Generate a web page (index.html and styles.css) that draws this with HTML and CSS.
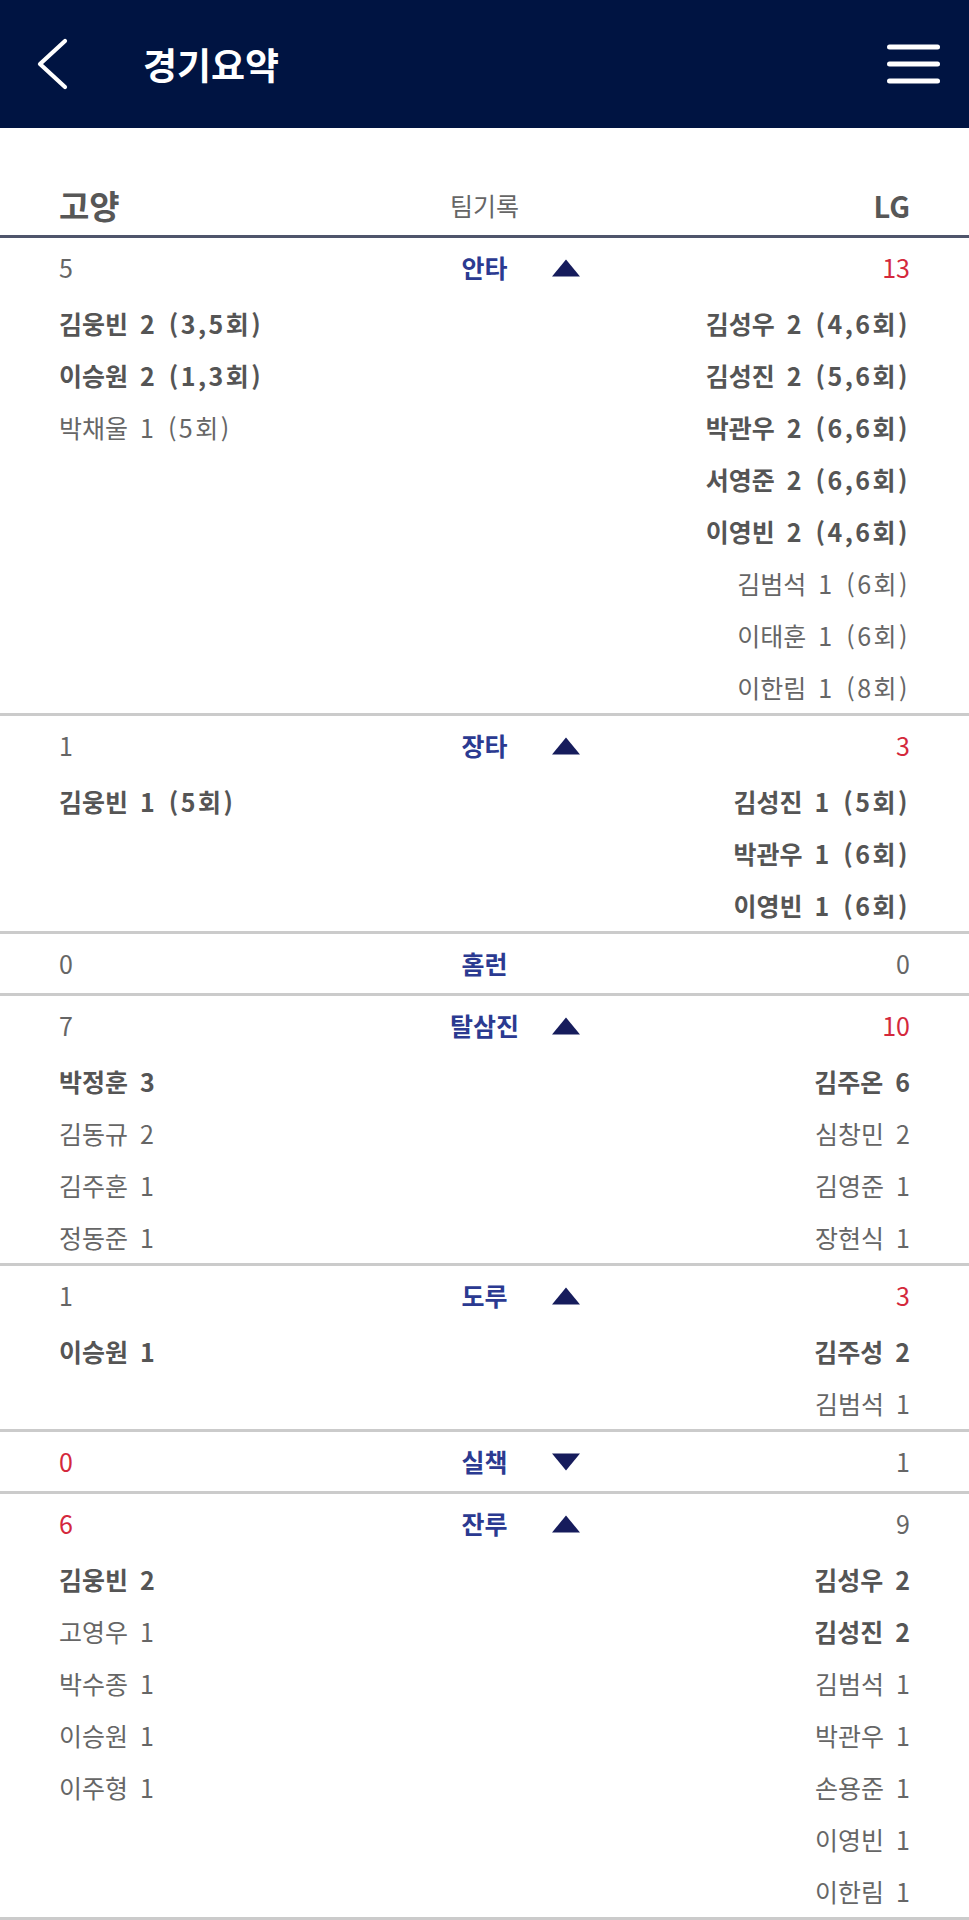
FILE: index.html
```html
<!DOCTYPE html>
<html lang="ko">
<head>
<meta charset="utf-8">
<title>경기요약</title>
<link rel="stylesheet" href="styles.css">
</head>
<body>
<header class="appbar">
  <svg class="back" viewBox="0 0 34 52" aria-hidden="true"><polyline points="29,3 4,26 29,49" fill="none" stroke="#fff" stroke-width="4.2" stroke-linecap="round" stroke-linejoin="round"/></svg>
  <h1 class="title">경기요약</h1>
  <svg class="menu" viewBox="0 0 53 44" aria-hidden="true"><rect x="0" y="2.5" width="53" height="5" rx="2.5" fill="#fff"/><rect x="0" y="19.5" width="53" height="5" rx="2.5" fill="#fff"/><rect x="0" y="36.5" width="53" height="5" rx="2.5" fill="#fff"/></svg>
</header>

<div class="teams">
  <span class="team">고양</span>
  <span class="teams-label">팀기록</span>
  <span class="team r">LG</span>
</div>

<section class="stat">
  <div class="head"><span class="v">5</span><span class="label">안타<i class="tri up"></i></span><span class="v r red">13</span></div>
  <div class="names">
    <div class="col">
      <span class="n b">김웅빈 2 <span class="inn">(3,5회)</span></span>
      <span class="n b">이승원 2 <span class="inn">(1,3회)</span></span>
      <span class="n">박채울 1 <span class="inn">(5회)</span></span>
    </div>
    <div class="col r">
      <span class="n b">김성우 2 <span class="inn">(4,6회)</span></span>
      <span class="n b">김성진 2 <span class="inn">(5,6회)</span></span>
      <span class="n b">박관우 2 <span class="inn">(6,6회)</span></span>
      <span class="n b">서영준 2 <span class="inn">(6,6회)</span></span>
      <span class="n b">이영빈 2 <span class="inn">(4,6회)</span></span>
      <span class="n">김범석 1 <span class="inn">(6회)</span></span>
      <span class="n">이태훈 1 <span class="inn">(6회)</span></span>
      <span class="n">이한림 1 <span class="inn">(8회)</span></span>
    </div>
  </div>
</section>

<section class="stat">
  <div class="head"><span class="v">1</span><span class="label">장타<i class="tri up"></i></span><span class="v r red">3</span></div>
  <div class="names">
    <div class="col">
      <span class="n b">김웅빈 1 <span class="inn">(5회)</span></span>
    </div>
    <div class="col r">
      <span class="n b">김성진 1 <span class="inn">(5회)</span></span>
      <span class="n b">박관우 1 <span class="inn">(6회)</span></span>
      <span class="n b">이영빈 1 <span class="inn">(6회)</span></span>
    </div>
  </div>
</section>

<section class="stat">
  <div class="head"><span class="v">0</span><span class="label">홈런</span><span class="v r">0</span></div>
</section>

<section class="stat">
  <div class="head"><span class="v">7</span><span class="label">탈삼진<i class="tri up"></i></span><span class="v r red">10</span></div>
  <div class="names">
    <div class="col">
      <span class="n b">박정훈 3</span>
      <span class="n">김동규 2</span>
      <span class="n">김주훈 1</span>
      <span class="n">정동준 1</span>
    </div>
    <div class="col r">
      <span class="n b">김주온 6</span>
      <span class="n">심창민 2</span>
      <span class="n">김영준 1</span>
      <span class="n">장현식 1</span>
    </div>
  </div>
</section>

<section class="stat">
  <div class="head"><span class="v">1</span><span class="label">도루<i class="tri up"></i></span><span class="v r red">3</span></div>
  <div class="names">
    <div class="col">
      <span class="n b">이승원 1</span>
    </div>
    <div class="col r">
      <span class="n b">김주성 2</span>
      <span class="n">김범석 1</span>
    </div>
  </div>
</section>

<section class="stat">
  <div class="head"><span class="v red">0</span><span class="label">실책<i class="tri down"></i></span><span class="v r">1</span></div>
</section>

<section class="stat">
  <div class="head"><span class="v red">6</span><span class="label">잔루<i class="tri up"></i></span><span class="v r">9</span></div>
  <div class="names">
    <div class="col">
      <span class="n b">김웅빈 2</span>
      <span class="n">고영우 1</span>
      <span class="n">박수종 1</span>
      <span class="n">이승원 1</span>
      <span class="n">이주형 1</span>
    </div>
    <div class="col r">
      <span class="n b">김성우 2</span>
      <span class="n b">김성진 2</span>
      <span class="n">김범석 1</span>
      <span class="n">박관우 1</span>
      <span class="n">손용준 1</span>
      <span class="n">이영빈 1</span>
      <span class="n">이한림 1</span>
    </div>
  </div>
</section>
</body>
</html>
```

FILE: styles.css
```css
* { box-sizing: border-box; }

body {
  margin: 0;
  background: #fff;
  color: #666;
  font-family: "Noto Sans CJK KR", "Noto Sans", sans-serif;
}

.appbar {
  height: 128px;
  background: #001442;
  display: flex;
  align-items: center;
}

.back {
  width: 34px;
  height: 52px;
  margin-left: 36px;
  flex: none;
}

.title {
  margin: 0 0 0 73px;
  color: #fff;
  font-size: 37px;
  font-weight: 700;
  line-height: 1;
}

.menu {
  width: 53px;
  height: 44px;
  margin-left: auto;
  margin-right: 29px;
  flex: none;
}

.teams {
  height: 110px;
  padding: 50px 59px 2px;
  border-bottom: 3px solid #4f556b;
  display: grid;
  grid-template-columns: 1fr auto 1fr;
  align-items: center;
}

.team {
  font-size: 33px;
  font-weight: 700;
  color: #575757;
  line-height: 1;
}

.team.r {
  text-align: right;
  font-size: 29px;
}

.teams-label {
  font-size: 25px;
  color: #666;
  line-height: 1;
}

.stat {
  border-bottom: 3px solid #cbcbcb;
}

.head {
  height: 59px;
  padding: 0 59px;
  display: grid;
  grid-template-columns: 1fr auto 1fr;
  align-items: center;
  font-size: 25px;
  line-height: 1;
}

.v { color: #666; }
.v.r { text-align: right; }
.red { color: #d4283c; }

.label {
  position: relative;
  color: #2b3a91;
  font-weight: 700;
}

.tri {
  position: absolute;
  left: calc(50% + 68px);
  top: 50%;
  width: 0;
  height: 0;
  border-left: 14px solid transparent;
  border-right: 14px solid transparent;
  transform: translateY(-50%);
}

.tri.up { border-bottom: 17px solid #161c5c; }
.tri.down { border-top: 17px solid #161c5c; }

.names {
  padding: 0 59px;
  display: grid;
  grid-template-columns: 1fr 1fr;
}

.col {
  display: flex;
  flex-direction: column;
  align-items: flex-start;
}

.col.r { align-items: flex-end; }

.n {
  height: 52px;
  line-height: 52px;
  font-size: 25px;
  white-space: nowrap;
  word-spacing: 5px;
  color: #666;
}

.n.b {
  font-weight: 700;
  color: #555;
}

.inn {
  margin-left: 2px;
  letter-spacing: 2.5px;
}
```
